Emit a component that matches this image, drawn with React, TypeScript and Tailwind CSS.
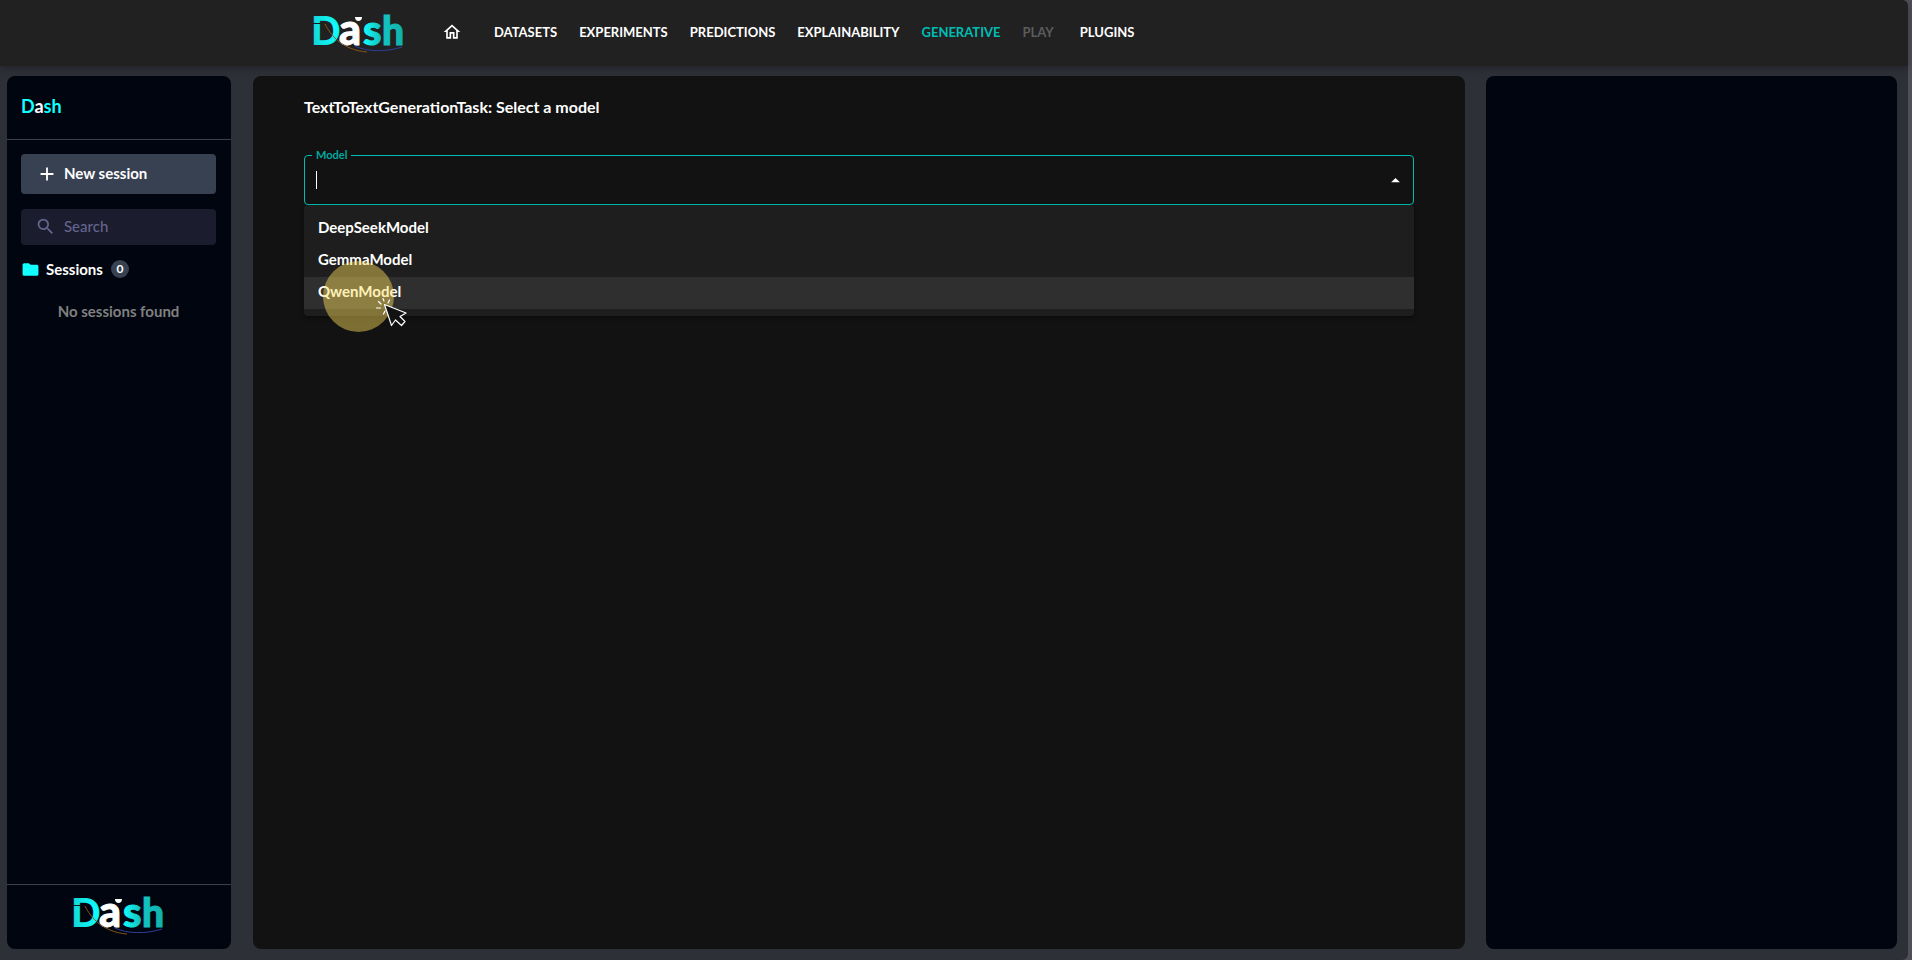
import { MdAdd, MdArrowDropUp, MdFolder, MdOutlineHome, MdSearch } from "react-icons/md";
import clsx from "clsx";

const navItems = [
  { label: "DATASETS" },
  { label: "EXPERIMENTS" },
  { label: "PREDICTIONS" },
  { label: "EXPLAINABILITY" },
  { label: "GENERATIVE", active: true },
  { label: "PLAY", disabled: true },
  { label: "PLUGINS" },
];

const models = ["DeepSeekModel", "GemmaModel", "QwenModel"];
const hoveredModel = "QwenModel";

function Logo({ id }: { id: string }) {
  return (
    <svg width="100" height="58" viewBox="-4 -14 100 58" role="img" aria-label="Dash">
      <defs>
        <radialGradient id={`${id}-d`} cx="0.75" cy="0.5" r="0.8">
          <stop offset="0" stopColor="#12ffff" />
          <stop offset="1" stopColor="#12d2d2" />
        </radialGradient>
        <linearGradient id={`${id}-s`} x1="0" x2="1">
          <stop offset="0" stopColor="#12ffff" />
          <stop offset="1" stopColor="#14bdb9" />
        </linearGradient>
        <linearGradient id={`${id}-h`} x1="0" x2="1">
          <stop offset="0" stopColor="#12c6c4" />
          <stop offset="1" stopColor="#12b0aa" />
        </linearGradient>
      </defs>
      <g fontFamily="Lato, sans-serif" fontWeight="900" strokeWidth="1">
        <text x="-2" y="28" fontSize="39" fill={`url(#${id}-d)`}>
          D
        </text>
        <text x="26" y="28" fontSize="43" fill="#ffffff" stroke="#ffffff">
          a
        </text>
        <text x="50" y="28" fontSize="42" fill={`url(#${id}-s)`} stroke={`url(#${id}-s)`}>
          s
        </text>
        <text x="69" y="28" fontSize="39" fill={`url(#${id}-h)`} stroke={`url(#${id}-h)`}>
          h
        </text>
      </g>
      <path d="M42 0h7c0 2.500-1.500 4-3.500 4s-3.500-1.500-3.500-4Z" fill="#ffffff" />
      <path d="M0 6.500h8" stroke="#16181f" />
      <path d="M12 7c6 12 18 26 42 28" fill="none" stroke="#8a5418" />
      <path d="M42 29c12 6 32 6 47 1" fill="none" stroke="#2b3f9b" />
    </svg>
  );
}

function Header() {
  return (
    <header className="relative flex h-[66px] shrink-0 items-start rounded-tr-md bg-[#212121] pl-[309px] shadow-[0_2px_8px_rgba(0,0,0,0.3)]">
      <a href="#" className="block w-[100px] pt-[3px]">
        <Logo id="top" />
      </a>
      <a href="#" aria-label="Home" className="mt-[22px] ml-[33px] text-white">
        <MdOutlineHome size={20} />
      </a>
      <nav className="mt-[22px] ml-8 flex gap-[22px] text-[13px] leading-5 font-bold text-white">
        {navItems.map((item) => (
          <a
            key={item.label}
            href="#"
            aria-disabled={item.disabled}
            className={clsx(
              item.active && "text-[#00bdb4]",
              item.disabled && "mr-1 text-[#5c5c5c]"
            )}
          >
            {item.label}
          </a>
        ))}
      </nav>
    </header>
  );
}

function Sidebar() {
  return (
    <aside className="flex w-56 shrink-0 flex-col rounded-lg bg-[#01050f]">
      <h2 className="border-b border-[#3c3f4a] px-[14px] pt-[18px] pb-[21px] text-lg leading-6 font-bold text-[#12ffff]">
        D<span className="text-white">a</span>sh
      </h2>
      <div className="flex grow flex-col pt-[14px] pr-[15px] pl-[14px]">
        <button className="flex h-10 items-center rounded bg-[#374151] pb-px pl-[15px] text-[15px] font-bold text-white">
          <MdAdd size={22} />
          <span className="ml-[6px]">New session</span>
        </button>
        <label className="mt-[15px] flex h-9 items-center gap-2 rounded bg-[#1b1c2e] pb-px pl-[14px] text-[#64658d]">
          <MdSearch size={21} className="shrink-0" />
          <input
            type="search"
            aria-label="Search"
            placeholder="Search"
            className="w-full min-w-0 bg-transparent text-[15px] font-medium outline-none placeholder:text-[#64658d]"
          />
        </label>
        <div className="mt-[14px] flex items-center text-[15px] font-bold text-white">
          <MdFolder size={19} className="text-[#12ffff]" />
          <span className="ml-[6px] leading-5">Sessions</span>
          <span className="ml-2 flex size-[18px] items-center justify-center rounded-full bg-[#374151] text-xs">
            0
          </span>
        </div>
        <p className="mt-[22px] text-center text-[15px] leading-5 font-bold text-[#808080]">
          No sessions found
        </p>
      </div>
      <footer className="flex h-[65px] justify-center border-t border-[#3c3f4a]">
        <Logo id="bottom" />
      </footer>
    </aside>
  );
}

function ModelSelect() {
  return (
    <div className="relative mt-[30px] text-[15px]">
      <fieldset className="h-[58px] rounded border border-[#00bdb4] px-[7px] pb-2">
        <legend className="px-1 text-[11px] leading-4 font-bold text-[#00a89f]">
          <label htmlFor="model">Model</label>
        </legend>
        <div className="flex h-[34px] items-center">
          <span className="ml-1 h-[18px] w-px bg-white" />
          <input
            id="model"
            type="text"
            role="combobox"
            aria-expanded="true"
            aria-controls="models"
            className="h-6 grow bg-transparent text-white outline-none"
          />
          <button aria-label="Close" className="text-white">
            <MdArrowDropUp size={21} />
          </button>
        </div>
      </fieldset>
      <ul
        id="models"
        role="listbox"
        className="rounded bg-[#1e1e1e] pt-2 pb-[7px] shadow-[0_2px_4px_rgba(0,0,0,0.4)]"
      >
        {models.map((model) => (
          <li
            key={model}
            role="option"
            aria-selected={model === hoveredModel}
            className={clsx(
              "h-8 px-[14px] leading-7 font-bold text-white",
              model === hoveredModel && "bg-[#2f2f2f]"
            )}
          >
            {model}
          </li>
        ))}
      </ul>
      <ClickMarker />
    </div>
  );
}

// Pointer with the click highlight, floats over the option list
function ClickMarker() {
  return (
    <div className="pointer-events-none absolute top-[114px] left-[19px] size-[71px] rounded-full bg-[#ffdf5a]/45">
      <svg
        className="absolute top-9 left-[52px]"
        width="34"
        height="32"
        viewBox="0 0 34 32"
        fill="none"
        stroke="#ffffff"
        strokeLinejoin="round"
        strokeLinecap="round"
      >
        <path d="M9.500 7.500 31 16l-6 3.500 5 5-3.500 4-6-5.500-4 5.500Z" fill="#121212" strokeWidth="1.200" />
        <path d="M1.500 11h4M3.500 4.500 6 7M8 1.500 9 4M14.500 3 13 6M8.500 17 10 14" strokeWidth="1.200" />
      </svg>
    </div>
  );
}

export default function App() {
  return (
    <div className="h-screen bg-[#504f57] pr-1 font-[Lato,sans-serif]">
      <div className="flex h-full flex-col rounded-r-md bg-[#2e3038]">
        <Header />
        <div className="flex grow pt-[10px] pr-[11px] pb-[11px] pl-[7px]">
          <Sidebar />
          <main className="ml-[22px] grow rounded-lg bg-[#121212] px-[51px] pt-[21px]">
            <h1 className="text-base leading-5 font-bold text-white">
              TextToTextGenerationTask: Select a model
            </h1>
            <ModelSelect />
          </main>
          <section aria-label="Parameters" className="ml-[21px] w-[411px] shrink-0 rounded-lg bg-[#01050f]" />
        </div>
      </div>
    </div>
  );
}
